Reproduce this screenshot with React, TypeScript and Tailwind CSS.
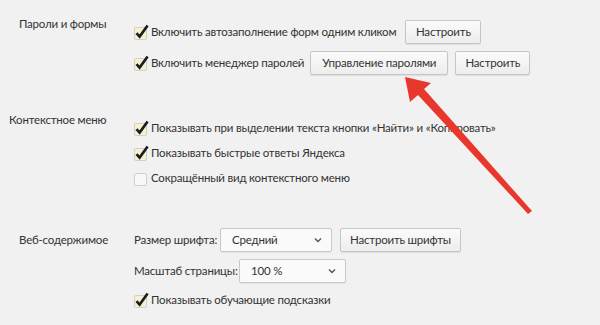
import React from "react";

function Check({ checked = true }: { checked?: boolean }) {
  return (
    <svg width="16" height="17" viewBox="0 0 16 17" className="shrink-0">
      <rect
        x="0.5"
        y="3.5"
        width="12"
        height="12"
        rx="1.5"
        fill={checked ? "#f6f0cf" : "#f8f8f8"}
        stroke="#cfcfcf"
      />
      {checked && (
        <path d="M2.5 9.2 L5.6 12.6 L13.6 1.4" fill="none" stroke="#1c1c1c" strokeWidth="2.6" strokeLinejoin="miter" />
      )}
    </svg>
  );
}

function CheckRow({ text, checked = true }: { text: string; checked?: boolean }) {
  return (
    <div className="flex items-center gap-[1px] h-[20px] whitespace-nowrap">
      <Check checked={checked} />
      <span>{text}</span>
    </div>
  );
}

function Btn({ children, w }: { children: React.ReactNode; w?: string }) {
  return (
    <div
      className={
        "h-[24px] flex items-center justify-center whitespace-nowrap rounded-[2px] border border-[#c6c6c6] bg-gradient-to-b from-[#fbfbfb] to-[#ededed] shadow-[0_1px_1px_rgba(0,0,0,0.08)] " +
        (w ?? "")
      }
    >
      {children}
    </div>
  );
}

function Select({ value, w }: { value: string; w: string }) {
  return (
    <div
      className={
        "h-[24px] flex items-center justify-between pl-[11px] pr-[9px] rounded-[2px] border border-[#c9c9c9] bg-[#fafafa] shadow-[0_1px_1px_rgba(0,0,0,0.06)] " +
        w
      }
    >
      <span>{value}</span>
      <svg width="8" height="6" viewBox="0 0 8 6">
        <path d="M1 1.5 L4 4.5 L7 1.5" fill="none" stroke="#555" strokeWidth="1.4" />
      </svg>
    </div>
  );
}

export default function App() {
  return (
    <div
      className="relative w-[600px] h-[325px] overflow-hidden bg-[#f1f1f1] text-[#333] text-[11.5px] tracking-[-0.2px] whitespace-nowrap"
      style={{ fontFamily: 'Lato, "Liberation Sans", sans-serif' }}
    >
      {/* Пароли и формы */}
      <div className="flex pt-[16px] pl-[19px]">
        <div className="w-[115px] shrink-0 leading-[16px]">Пароли и формы</div>
        <div className="pt-[4px] flex flex-col gap-[7px]">
          <div className="flex items-center gap-[9px]">
            <CheckRow text="Включить автозаполнение форм одним кликом" />
            <Btn w="w-[76px]">Настроить</Btn>
          </div>
          <div className="flex items-center">
            <CheckRow text="Включить менеджер паролей" />
            <div className="ml-[6px]">
              <Btn w="w-[138px]">Управление паролями</Btn>
            </div>
            <div className="ml-[7px]">
              <Btn w="w-[75px]">Настроить</Btn>
            </div>
          </div>
        </div>
      </div>

      {/* Контекстное меню */}
      <div className="flex pt-[37px] pl-[9px]">
        <div className="w-[125px] shrink-0 leading-[16px]">Контекстное меню</div>
        <div className="pt-[6px] flex flex-col gap-[5px]">
          <CheckRow text="Показывать при выделении текста кнопки «Найти» и «Копировать»" />
          <CheckRow text="Показывать быстрые ответы Яндекса" />
          <CheckRow text="Сокращённый вид контекстного меню" checked={false} />
        </div>
      </div>

      {/* Веб-содержимое */}
      <div className="flex pt-[40px] pl-[19px]">
        <div className="w-[115px] shrink-0 leading-[16px] pt-[4px]">Веб-содержимое</div>
        <div className="flex flex-col gap-[7px]">
          <div className="flex items-center">
            <span className="w-[86px] shrink-0">Размер шрифта:</span>
            <Select value="Средний" w="w-[112px]" />
            <div className="ml-[8px]">
              <Btn w="w-[121px]">Настроить шрифты</Btn>
            </div>
          </div>
          <div className="flex items-center">
            <span className="w-[105px] shrink-0">Масштаб страницы:</span>
            <Select value="100 %" w="w-[107px]" />
          </div>
          <div>
            <CheckRow text="Показывать обучающие подсказки" />
          </div>
        </div>
      </div>

      {/* red arrow overlay */}
      <svg className="absolute left-0 top-0 pointer-events-none" width="600" height="325" viewBox="0 0 600 325">
        <path
          d="M405 77 L431 83 L424 89 L532 211 L528 214 L418 95 L410 102 Z"
          fill="#e8372c"
        />
      </svg>
    </div>
  );
}
